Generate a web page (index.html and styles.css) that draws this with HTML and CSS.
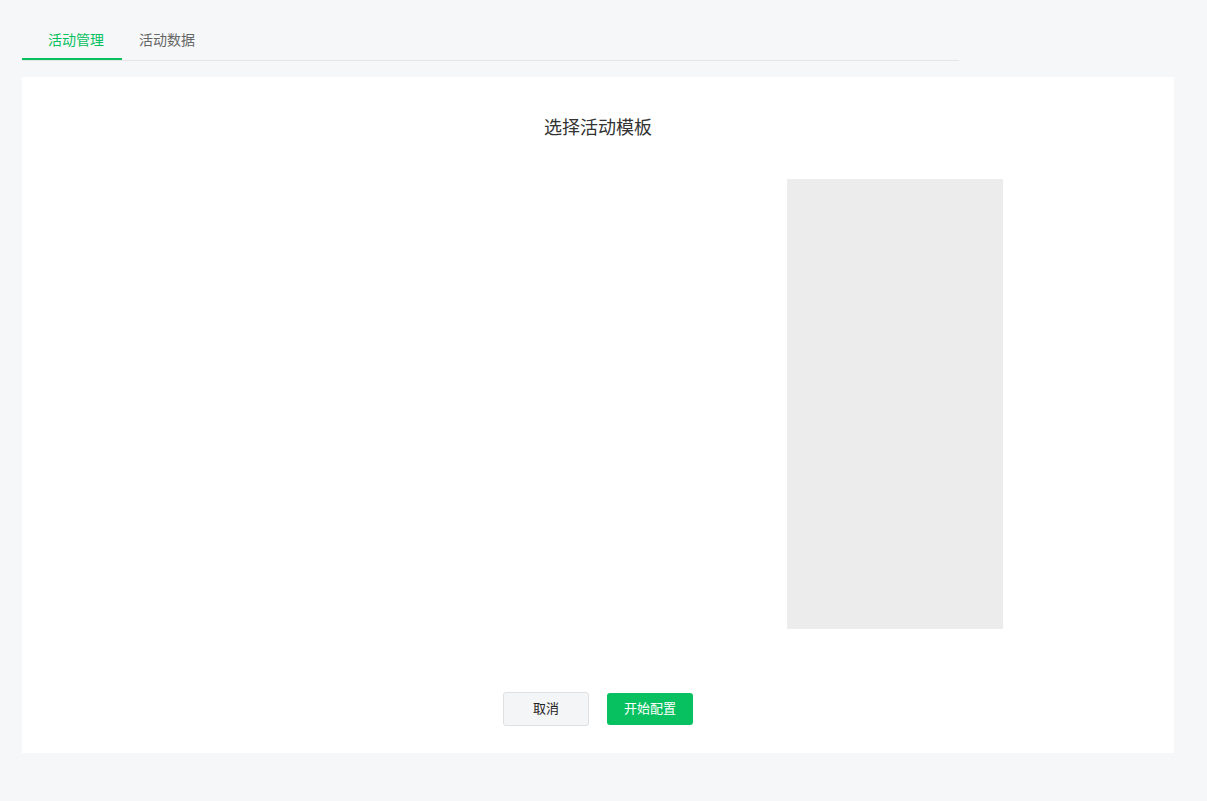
FILE: index.html
```html
<!DOCTYPE html>
<html lang="zh-CN">
<head>
<meta charset="utf-8">
<title>活动管理</title>
<link rel="stylesheet" href="styles.css">
</head>
<body>
<div class="page">
  <div class="tabs">
    <div class="tab active">活动管理</div>
    <div class="tab">活动数据</div>
  </div>
  <div class="card">
    <h2 class="title">选择活动模板</h2>
    <div class="content">
      <div class="list"></div>
      <div class="preview"></div>
    </div>
    <div class="actions">
      <button class="btn btn-default">取消</button>
      <button class="btn btn-primary">开始配置</button>
    </div>
  </div>
</div>
</body>
</html>
```

FILE: styles.css
```css
* { box-sizing: border-box; }
html, body {
  margin: 0;
  padding: 0;
  background: #f6f7f9;
  font-family: "Noto Sans CJK SC", "Microsoft YaHei", sans-serif;
}
.page {
  padding: 0 33px 48px 22px;
}
.tabs {
  display: flex;
  width: 937px;
  height: 61px;
  border-bottom: 1px solid #e4e5e7;
}
.tab {
  height: 60px;
  line-height: 20px;
  padding-top: 29px;
  font-size: 14px;
  color: #666;
}
.tab.active {
  width: 100px;
  padding-left: 26px;
  color: #07c160;
  border-bottom: 2px solid #07c160;
}
.tab + .tab {
  padding-left: 17px;
}
.card {
  margin-top: 16px;
  background: #fff;
  height: 676px;
  padding-top: 37px;
  display: flex;
  flex-direction: column;
}
.title {
  margin: 0;
  text-align: center;
  font-size: 18px;
  line-height: 24px;
  font-weight: normal;
  color: #333;
}
.content {
  display: grid;
  grid-template-columns: 765px 216px;
  margin-top: 41px;
}
.preview {
  height: 450px;
  background: #ececec;
}
.actions {
  display: flex;
  justify-content: center;
  align-items: center;
  gap: 18px;
  margin-top: 63px;
}
.btn {
  width: 86px;
  font-family: inherit;
  font-size: 13px;
  line-height: 18px;
  border-radius: 3px;
  cursor: pointer;
  padding: 0 0 2px;
}
.btn-default {
  height: 34px;
  background: #f4f5f7;
  border: 1px solid #dfe0e2;
  color: #222;
}
.btn-primary {
  height: 32px;
  background: #07c160;
  border: none;
  color: #fff;
}
```
